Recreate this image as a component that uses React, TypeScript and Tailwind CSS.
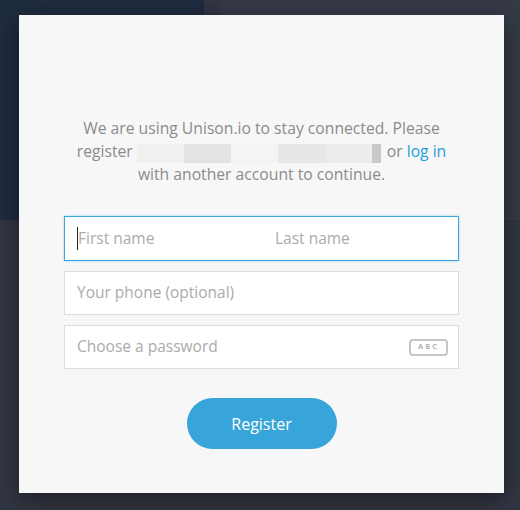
import React from "react";

const redactions = [
  { w: "w-[47px]", bg: "bg-[#f0f0f0]" },
  { w: "w-[47px]", bg: "bg-[#e3e3e3]" },
  { w: "w-[47px]", bg: "bg-[#f4f4f4]" },
  { w: "w-[48px]", bg: "bg-[#e7e7e7]" },
  { w: "w-[46px]", bg: "bg-[#ececec]" },
  { w: "w-[9px]", bg: "bg-[#c9c9c9]" },
];

export default function App() {
  return (
    <div className="relative w-[520px] h-[510px] overflow-hidden bg-[#353a46] font-['Open_Sans',sans-serif]">
      {/* page behind the overlay */}
      <div className="flex h-[220px]">
        <div className="w-[204px] bg-[#1f2c3f]" />
        <div className="w-[16px] bg-[#323744]" />
        <div className="flex-1 bg-[#363a47] border-b border-[#3b3f4b]" />
      </div>
      <div className="h-[290px] bg-[#323642]" />

      {/* modal */}
      <div className="absolute left-[19px] top-[15px] w-[485px] h-[478px] bg-[#f7f7f7] shadow-[0_6px_24px_rgba(0,0,0,0.45)] flex flex-col items-center pt-[102px]">
        <p className="w-[420px] text-center text-[15.7px] leading-[23px] text-[#8b8b8b]">
          We are using Unison.io to stay connected. Please
          <br />
          <span className="inline-flex items-center align-top">
            register
            <span className="inline-flex h-[19px] ml-[4px] mr-[6px] translate-y-[2px]">
              {redactions.map((r, i) => (
                <span key={i} className={`${r.w} ${r.bg} h-full`} />
              ))}
            </span>
            or&nbsp;<span className="text-[#1d9fdb]">log in</span>
          </span>
          <br />
          with another account to continue.
        </p>

        <div className="mt-[30px] w-[395px] flex flex-col gap-[10px]">
          <div className="h-[45px] bg-white border border-[#3aa6df] shadow-[0_0_2px_rgba(58,166,223,0.5)] flex items-center text-[15.5px] text-[#ababab]">
            <span className="ml-[12px] w-[1px] h-[23px] bg-[#222]" />
            <span className="w-[197px]">First name</span>
            <span>Last name</span>
          </div>
          <div className="h-[44px] bg-white border border-[#dcdcdc] flex items-center px-[12px] text-[15.5px] text-[#ababab]">
            Your phone (optional)
          </div>
          <div className="h-[44px] bg-white border border-[#dcdcdc] flex items-center justify-between pl-[12px] pr-[10px] text-[15.5px] text-[#ababab]">
            <span>Choose a password</span>
            <span className="w-[39px] h-[17px] border-2 border-[#c6c6c6] rounded-[4px] flex items-center justify-center text-[7.5px] font-bold tracking-[2px] text-[#b5b5b5] leading-none">
              ABC
            </span>
          </div>
        </div>

        <button className="mt-[29px] w-[150px] h-[51px] rounded-full bg-[#37a4da] text-white text-[16px]">
          Register
        </button>
      </div>
    </div>
  );
}
